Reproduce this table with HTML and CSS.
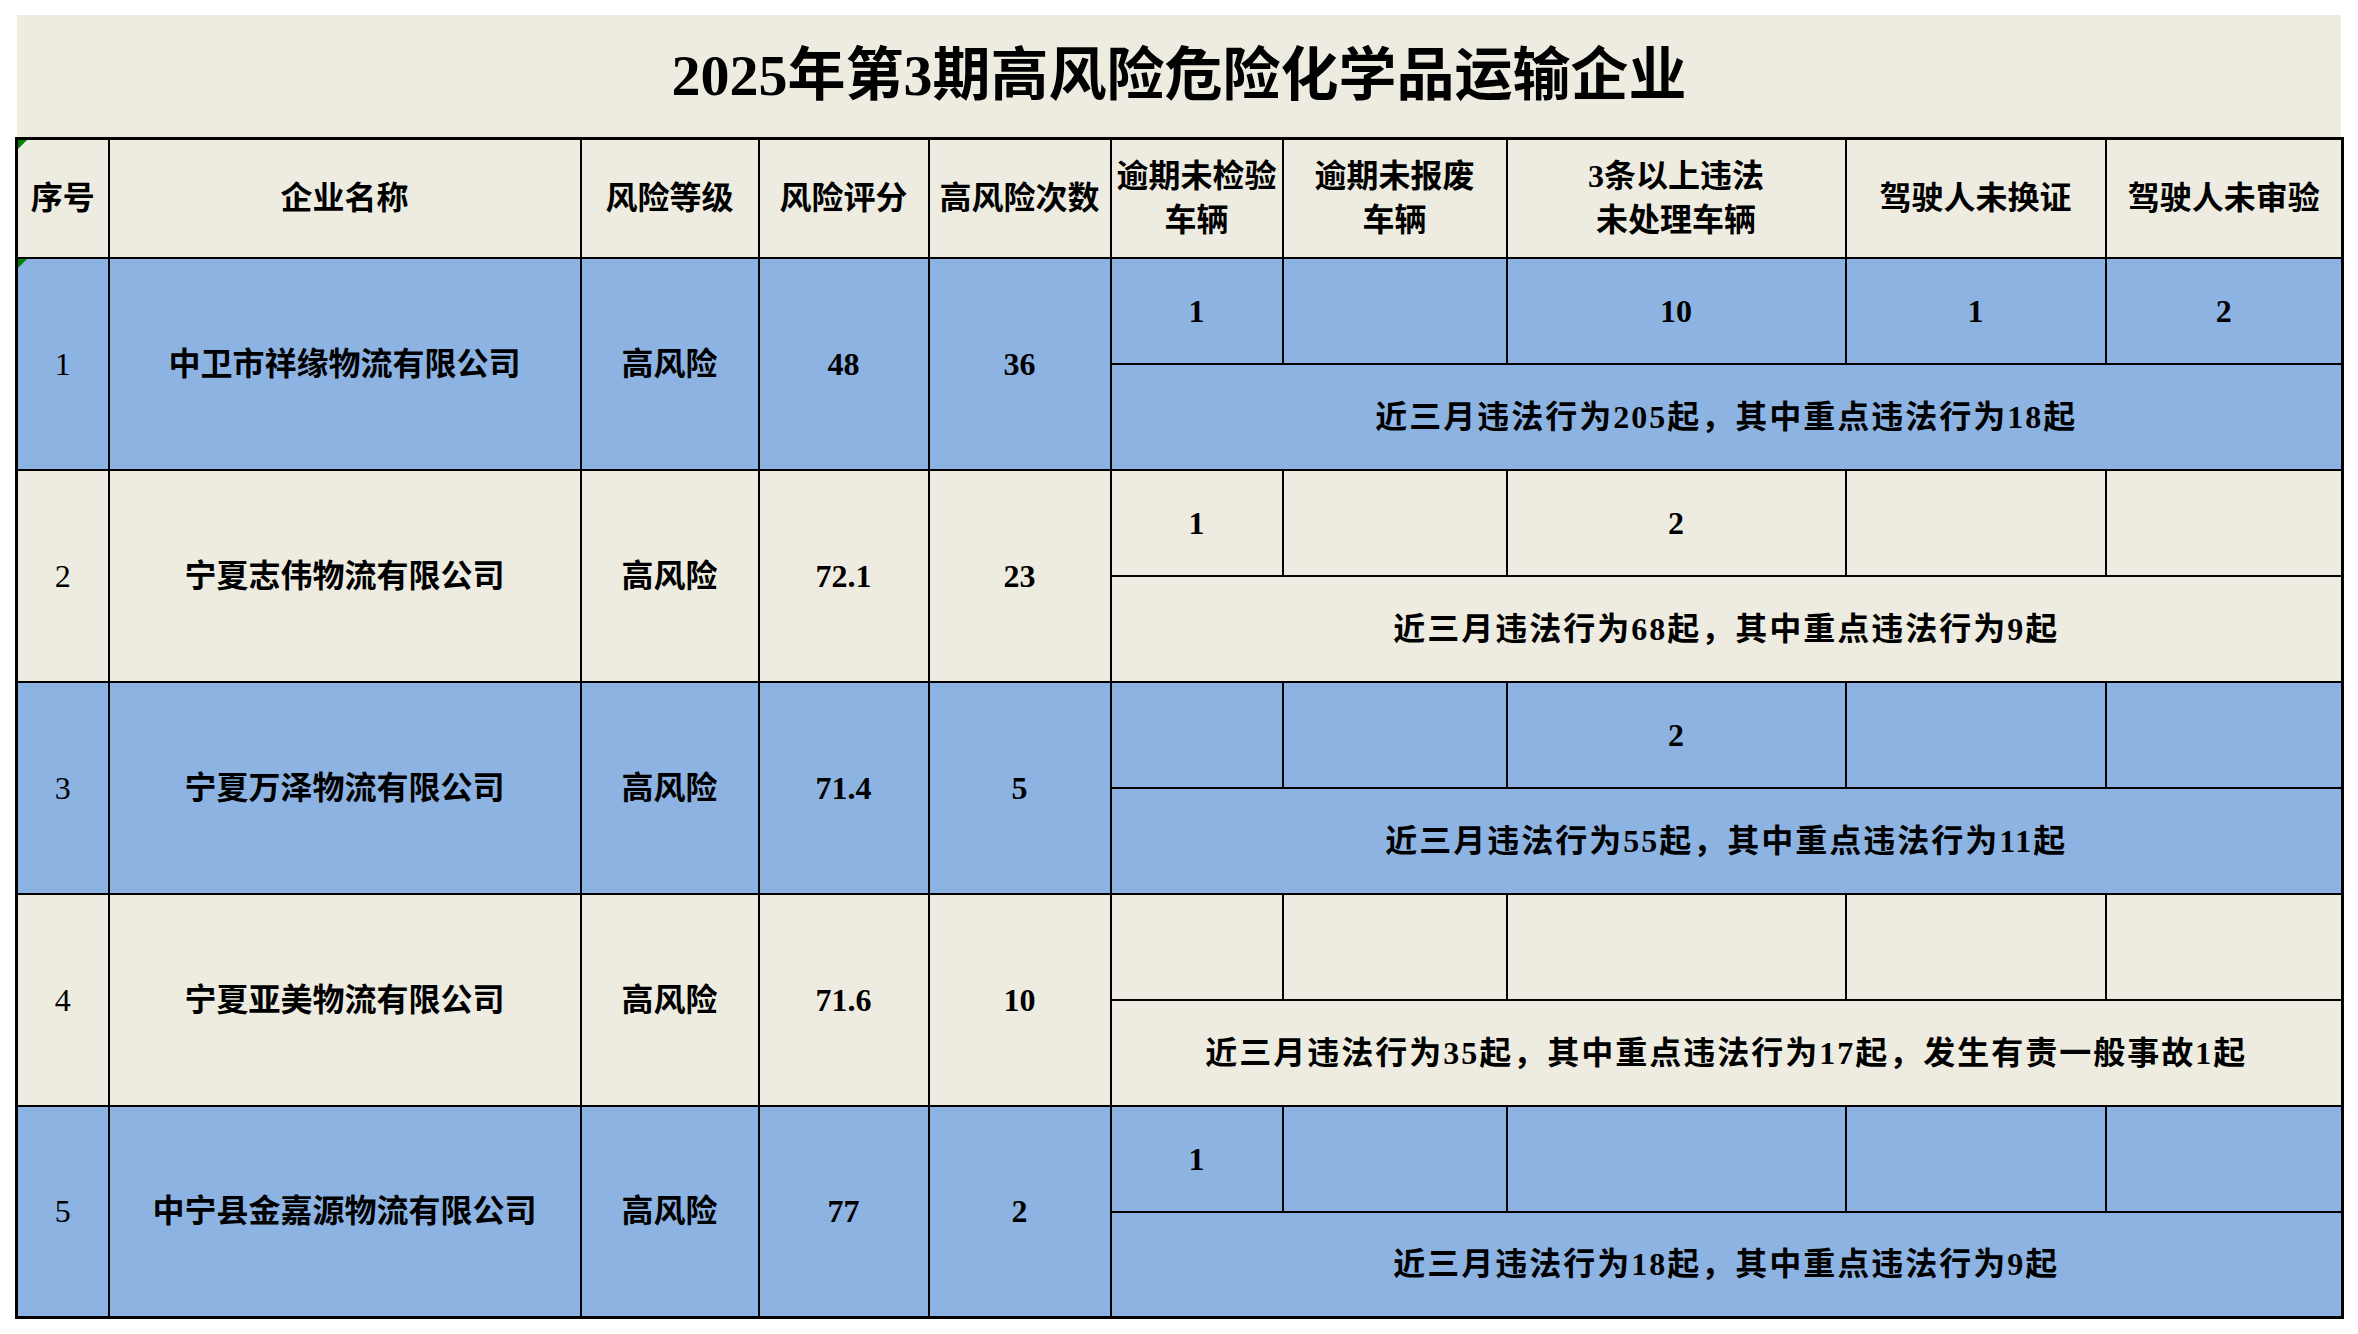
FILE: index.html
```html
<!DOCTYPE html>
<html lang="zh-CN">
<head>
<meta charset="utf-8">
<title>2025年第3期高风险危险化学品运输企业</title>
<link rel="stylesheet" href="styles.css">
</head>
<body>
<div class="sheet">
  <div class="title">2025年第3期高风险危险化学品运输企业</div>
  <table class="grid">
    <colgroup>
      <col class="c-no"><col class="c-name"><col class="c-level"><col class="c-score"><col class="c-times">
      <col class="c-insp"><col class="c-scrap"><col class="c-viol"><col class="c-lic"><col class="c-rev">
    </colgroup>
    <tr class="head">
      <th class="flag">序号</th>
      <th>企业名称</th>
      <th>风险等级</th>
      <th>风险评分</th>
      <th>高风险次数</th>
      <th>逾期未检验<br>车辆</th>
      <th>逾期未报废<br>车辆</th>
      <th>3条以上违法<br>未处理车辆</th>
      <th>驾驶人未换证</th>
      <th>驾驶人未审验</th>
    </tr>

    <tr class="sub blue">
      <td rowspan="2" class="no flag">1</td>
      <td rowspan="2">中卫市祥缘物流有限公司</td>
      <td rowspan="2">高风险</td>
      <td rowspan="2">48</td>
      <td rowspan="2">36</td>
      <td>1</td><td></td><td>10</td><td>1</td><td>2</td>
    </tr>
    <tr class="sub blue"><td colspan="5" class="note">近三月违法行为205起，其中重点违法行为18起</td></tr>

    <tr class="sub cream">
      <td rowspan="2" class="no">2</td>
      <td rowspan="2">宁夏志伟物流有限公司</td>
      <td rowspan="2">高风险</td>
      <td rowspan="2">72.1</td>
      <td rowspan="2">23</td>
      <td>1</td><td></td><td>2</td><td></td><td></td>
    </tr>
    <tr class="sub cream"><td colspan="5" class="note">近三月违法行为68起，其中重点违法行为9起</td></tr>

    <tr class="sub blue">
      <td rowspan="2" class="no">3</td>
      <td rowspan="2">宁夏万泽物流有限公司</td>
      <td rowspan="2">高风险</td>
      <td rowspan="2">71.4</td>
      <td rowspan="2">5</td>
      <td></td><td></td><td>2</td><td></td><td></td>
    </tr>
    <tr class="sub blue"><td colspan="5" class="note">近三月违法行为55起，其中重点违法行为11起</td></tr>

    <tr class="sub cream">
      <td rowspan="2" class="no">4</td>
      <td rowspan="2">宁夏亚美物流有限公司</td>
      <td rowspan="2">高风险</td>
      <td rowspan="2">71.6</td>
      <td rowspan="2">10</td>
      <td></td><td></td><td></td><td></td><td></td>
    </tr>
    <tr class="sub cream"><td colspan="5" class="note">近三月违法行为35起，其中重点违法行为17起，发生有责一般事故1起</td></tr>

    <tr class="sub blue">
      <td rowspan="2" class="no">5</td>
      <td rowspan="2">中宁县金嘉源物流有限公司</td>
      <td rowspan="2">高风险</td>
      <td rowspan="2">77</td>
      <td rowspan="2">2</td>
      <td>1</td><td></td><td></td><td></td><td></td>
    </tr>
    <tr class="sub blue"><td colspan="5" class="note">近三月违法行为18起，其中重点违法行为9起</td></tr>
  </table>
</div>
</body>
</html>
```

FILE: styles.css
```css
html, body {
  background: #ffffff;
}
body {
  margin: 15px 0 0 15px;
  font-family: "Liberation Serif", "Noto Sans CJK SC", serif;
  color: #000;
}
.sheet {
  width: 2326px;
}
.title {
  margin-left: 2px;
  width: 2324px;
  height: 122px;
  background: #EEECE1;
  display: flex;
  align-items: center;
  justify-content: center;
  font-size: 58px;
  font-weight: 700;
  line-height: 1;
}
.grid {
  border-collapse: collapse;
  table-layout: fixed;
  width: 2326px;
  border: 3px solid #000;
}
.c-no { width: 92px; }
.c-name { width: 472px; }
.c-level { width: 178px; }
.c-score { width: 170px; }
.c-times { width: 182px; }
.c-insp { width: 172px; }
.c-scrap { width: 224px; }
.c-viol { width: 339px; }
.c-lic { width: 260px; }
.c-rev { width: 237px; }

.grid th, .grid td {
  border: 2px solid #000;
  padding: 0;
  text-align: center;
  vertical-align: middle;
  font-size: 32px;
  font-weight: 700;
  line-height: 44px;
  position: relative;
}
.head {
  height: 119px;
  background: #EEECE1;
}
.sub {
  height: 106px;
}
.blue { background: #8DB3E2; }
.cream { background: #EEECE1; }
.grid td.no {
  font-weight: 400;
}
.grid td.note {
  letter-spacing: 2px;
}
.flag::before {
  content: "";
  position: absolute;
  left: 0;
  top: 0;
  width: 0;
  height: 0;
  border-top: 9px solid #008000;
  border-right: 9px solid transparent;
}
```
